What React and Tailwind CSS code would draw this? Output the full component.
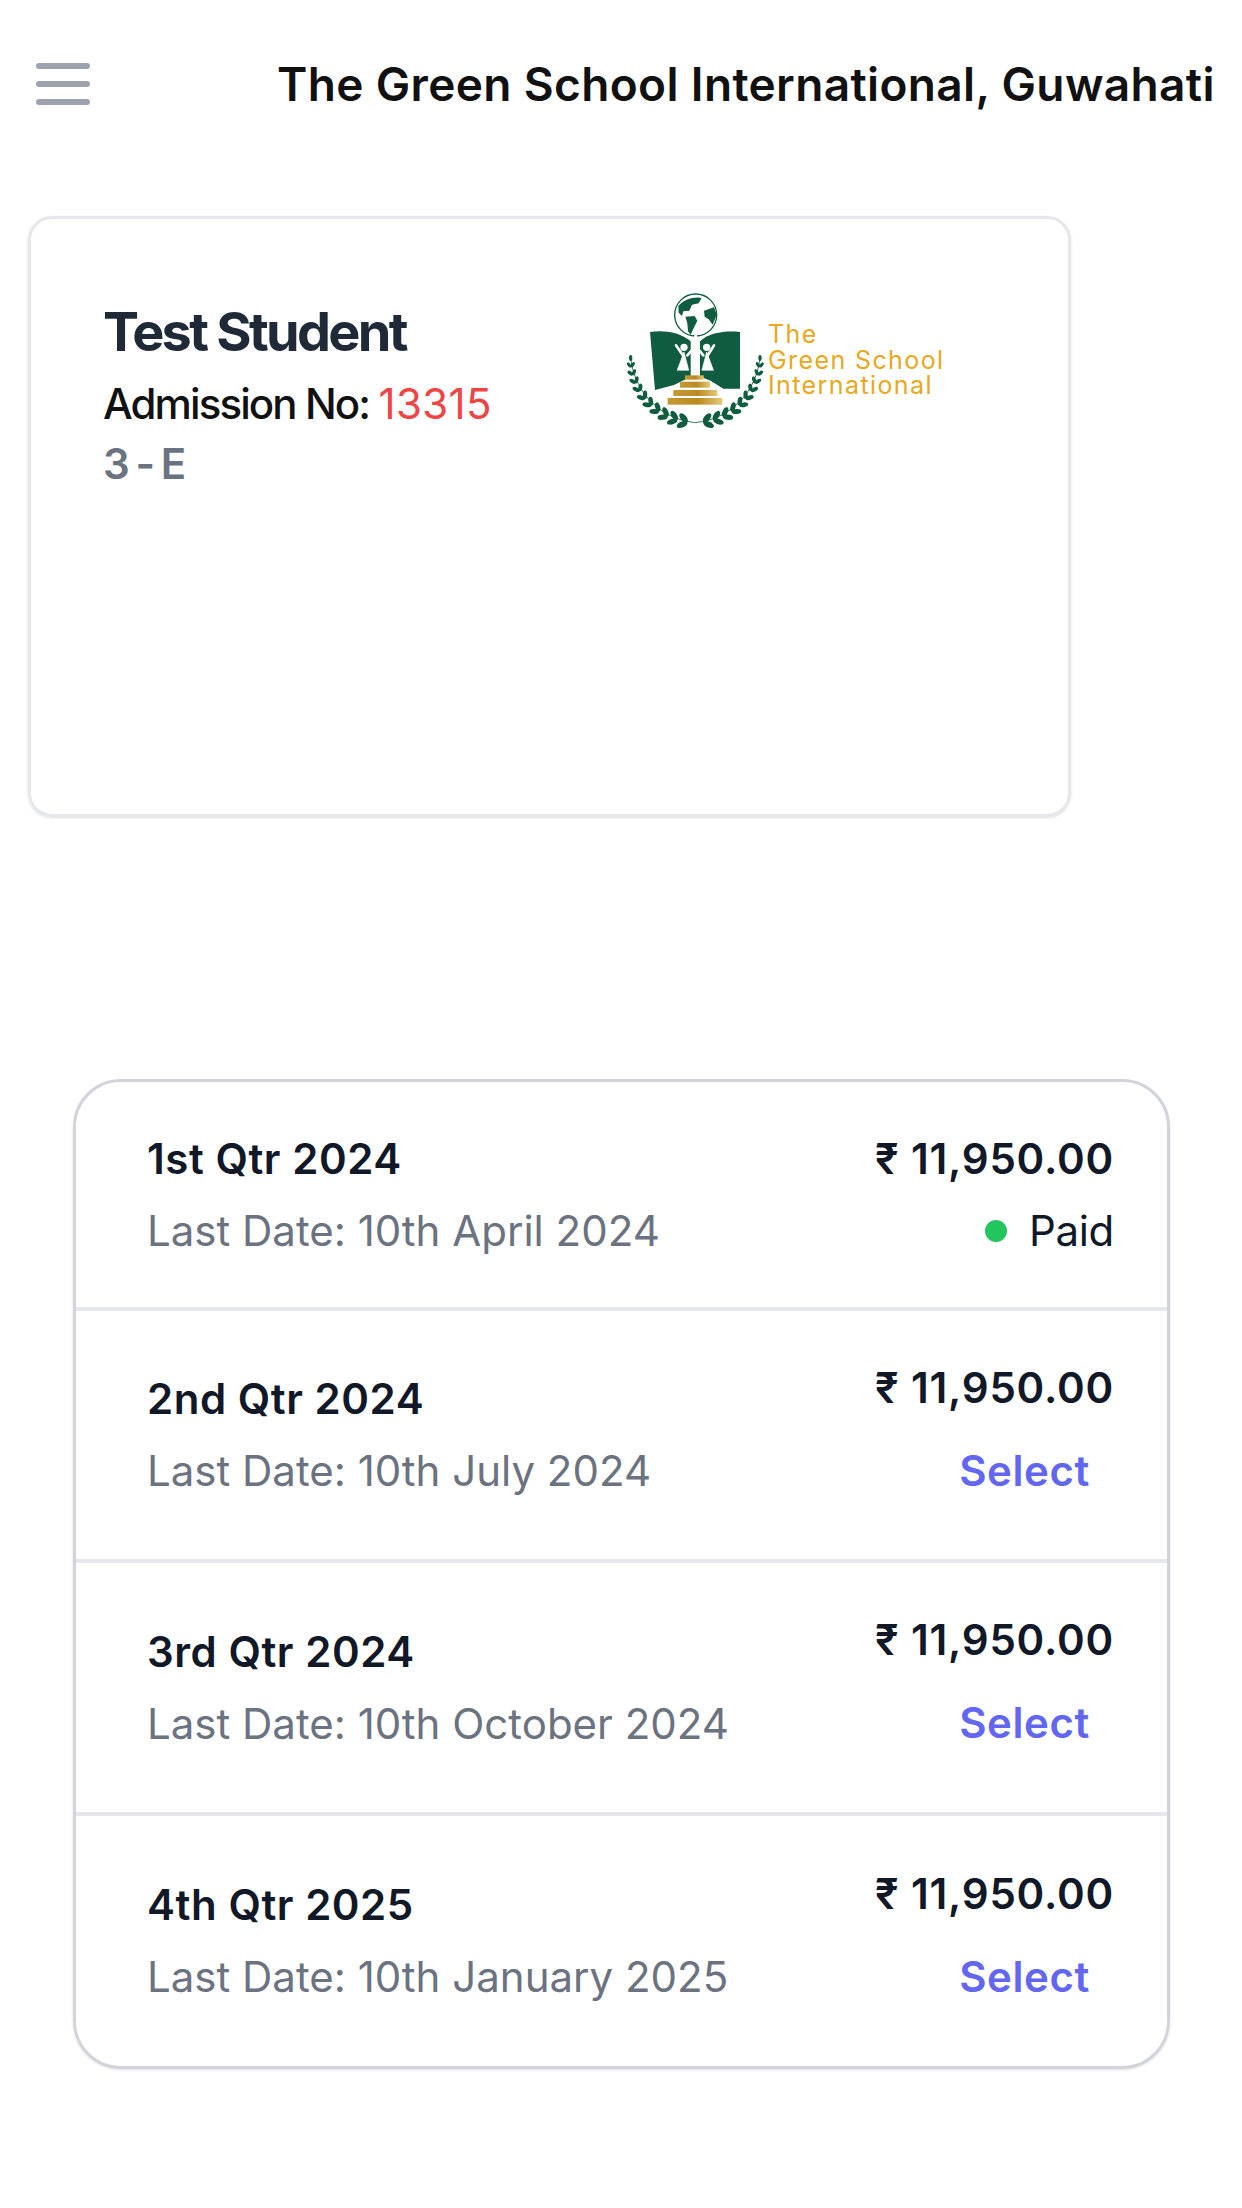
import React from 'react';

const stem = [
  [92, 268], [93, 292], [98, 316], [107, 340], [119, 364], [135, 387],
  [154, 407], [177, 425], [203, 440], [232, 450], [262, 457],
];

const Laurel = ({ flip }) => (
  <g fill="#0f5c40" transform={flip ? 'translate(572 0) scale(-1 1)' : undefined}>
    <path d="M92 262 C100 350 165 445 286 458" fill="none" stroke="#0f5c40" strokeWidth="2.5" />
    <ellipse cx="92" cy="264" rx="5" ry="9" />
    {stem.slice(1).map(([x, y], i) => {
      const [px, py] = stem[i];
      const a = (Math.atan2(py - y, px - x) * 180) / Math.PI;
      const rx = 9 + i * 0.9;
      return (
        <g key={x}>
          <ellipse cx={x + rx} cy={y} rx={rx} ry={rx * 0.52} transform={`rotate(${a + 36} ${x} ${y})`} />
          <ellipse cx={x + rx} cy={y} rx={rx} ry={rx * 0.52} transform={`rotate(${a - 36} ${x} ${y})`} />
        </g>
      );
    })}
  </g>
);

const Emblem = () => (
  <svg viewBox="0 0 570 510" className="w-[190px] h-[170px] shrink-0">
    <defs>
      <linearGradient id="gold" x1="0" x2="1" y1="0" y2="0">
        <stop offset="0" stopColor="#c79a35" />
        <stop offset="0.55" stopColor="#b98a24" />
        <stop offset="1" stopColor="#e3c878" />
      </linearGradient>
    </defs>
    <Laurel />
    <Laurel flip />
    <path d="M150 186 C190 180 240 186 272 214 L272 320 L222 345 L165 360 Z" fill="#0f5c40" />
    <path d="M300 214 C330 186 380 182 420 186 L420 356 L370 356 L332 332 L300 320 Z" fill="#0f5c40" />
    <circle cx="287" cy="135" r="63" fill="#fff" stroke="#0f5c40" strokeWidth="4" />
    <path d="M235 108 C250 88 285 78 305 84 L296 100 L276 104 L268 122 L250 124 L246 138 L236 128 Z" fill="#0f5c40" />
    <path d="M256 140 L284 138 L292 152 L280 176 L272 194 L264 184 L262 160 Z" fill="#0f5c40" />
    <path d="M312 122 L342 112 L350 134 L338 164 L326 148 L314 140 Z" fill="#0f5c40" />
    <g fill="#fff" stroke="#fff" strokeLinecap="round">
      <path d="M287 198 L287 306" strokeWidth="9" />
      <circle cx="252" cy="232" r="11" strokeWidth="0" />
      <path d="M232 300 L252 246 L266 300 Z" strokeWidth="2" />
      <path d="M228 226 L250 258 M262 256 L282 234" strokeWidth="8" fill="none" />
      <circle cx="320" cy="232" r="11" strokeWidth="0" />
      <path d="M340 300 L320 246 L306 300 Z" strokeWidth="2" />
      <path d="M342 226 L322 258 M310 256 L292 234" strokeWidth="8" fill="none" />
    </g>
    <rect x="255" y="316" width="56" height="13" fill="url(#gold)" />
    <rect x="240" y="335" width="90" height="18" fill="url(#gold)" />
    <rect x="220" y="360" width="132" height="18" fill="url(#gold)" />
    <rect x="203" y="384" width="164" height="20" fill="url(#gold)" />
  </svg>
);

const rows = [
  { title: '1st Qtr 2024', date: 'Last Date: 10th April 2024', paid: true, h: 'h-[229px]' },
  { title: '2nd Qtr 2024', date: 'Last Date: 10th July 2024', h: 'h-[252px]' },
  { title: '3rd Qtr 2024', date: 'Last Date: 10th October 2024', h: 'h-[253px]' },
  { title: '4th Qtr 2025', date: 'Last Date: 10th January 2025', h: 'h-[250px]', last: true },
];

const FeeRow = ({ title, date, paid, h, last }) => (
  <div className={`flex items-center justify-between pl-[71px] pr-[53px] ${h} ${last ? '' : 'border-b-[4px] border-[#e5e7eb]'}`}>
    <div>
      <p className="text-[42px] leading-[60px] font-semibold tracking-[0.55px] text-[#111827]">{title}</p>
      <p className="mt-[12px] text-[42px] leading-[60px] text-[#6b7280]">{date}</p>
    </div>
    <div className="flex flex-col items-end">
      <p className="text-[42px] leading-[60px] font-semibold tracking-[0.8px] text-[#111827]">₹ 11,950.00</p>
      {paid ? (
        <div className="mt-[12px] flex items-center">
          <span className="w-[22px] h-[22px] rounded-full bg-[#22c55e] mr-[22px]" />
          <span className="text-[42px] leading-[60px] tracking-[-0.3px] text-[#111827]">Paid</span>
        </div>
      ) : (
        <button className="mt-[11px] py-[12px] pr-[24px] text-[42px] leading-[60px] font-semibold tracking-[0.6px] text-[#6366f1]">Select</button>
      )}
    </div>
  </div>
);

export default function App() {
  return (
    <div className="w-[1242px] h-[2208px] bg-white overflow-hidden font-['Inter',sans-serif]">
      <header className="flex items-center pt-[49px] pl-[27px]">
        <svg viewBox="0 0 24 24" className="-mt-[1px] w-[72px] h-[72px] text-[#9ca3af]" fill="none" stroke="currentColor" strokeWidth="2" strokeLinecap="round">
          <path d="M4 6h16M4 12h16M4 18h16" />
        </svg>
        <h1 className="ml-[178px] text-[46px] leading-[71px] font-semibold tracking-[0.36px] text-[#111] whitespace-nowrap">The Green School International, Guwahati</h1>
      </header>

      <section className="mt-[96px] ml-[28px] w-[1043px] h-[601px] rounded-[24px] border-[3px] border-[#e5e7eb] shadow-sm flex items-start pl-[72px]">
        <div className="w-[500px] pt-[77px]">
          <h2 className="text-[54px] leading-[72px] font-bold tracking-[-2.7px] text-[#1f2937]">Test Student</h2>
          <p className="mt-[6px] text-[42px] leading-[60px] font-medium tracking-[-1.9px] text-[#111]">
            Admission No: <span className="font-normal tracking-[0.4px] text-[#ef4444]">13315</span>
          </p>
          <p className="text-[42px] leading-[60px] font-semibold tracking-[-2.4px] text-[#6b7280]">3 - E</p>
        </div>
        <div className="flex items-start mt-[51px] -ml-[3px]">
          <Emblem />
          <div className="mt-[52px] -ml-[22px] text-[25px] leading-[25.5px] text-[#e8a820] tracking-[1.4px] whitespace-nowrap">
            <p>The</p>
            <p>Green School</p>
            <p>International</p>
          </div>
        </div>
      </section>

      <section className="mt-[262px] ml-[73px] w-[1097px] rounded-[48px] border-[3px] border-[#d1d5db] shadow-sm">
        {rows.map((row) => (
          <FeeRow key={row.title} {...row} />
        ))}
      </section>
    </div>
  );
}
